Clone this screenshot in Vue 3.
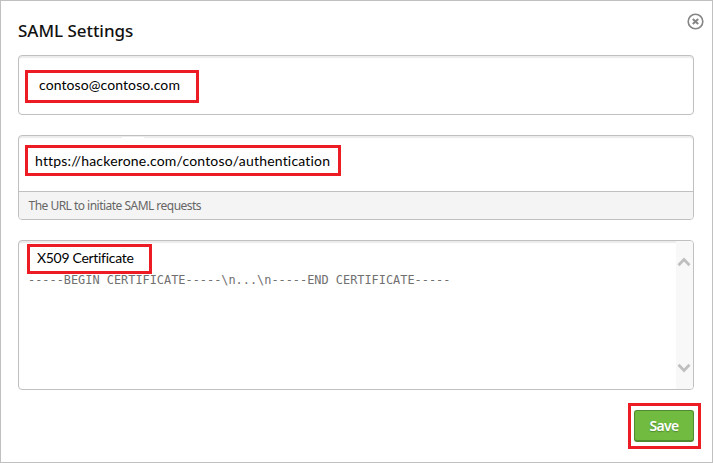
<script setup>
import { ref } from 'vue'

const email = ref('contoso@contoso.com')
const url = ref('https://hackerone.com/contoso/authentication')
const certificate = '-----BEGIN CERTIFICATE-----\\n...\\n-----END CERTIFICATE-----'
</script>

<template>
  <main class="dialog">
    <header class="header">
      <h1 class="title"><span>SAML Settings</span></h1>
      <button class="close" aria-label="Close">
        <svg width="17" height="17" viewBox="0 0 17 17" fill="none" stroke="#858585">
          <circle cx="8.5" cy="8.5" r="7.3" stroke-width="1.6" />
          <path d="M5.8 6l5.4 5M11.2 6l-5.4 5" stroke-width="2" />
        </svg>
      </button>
    </header>

    <section class="field email">
      <div class="mark mark-email"><span class="value">{{ email }}</span></div>
    </section>

    <section class="field url">
      <div class="url-body">
        <div class="mark mark-url"><span class="value">{{ url }}</span></div>
      </div>
      <div class="hint"><span>The URL to initiate SAML requests</span></div>
    </section>

    <section class="field cert">
      <div class="cert-body">
        <div class="mark mark-cert"><span class="value">X509 Certificate</span></div>
        <div class="code">{{ certificate }}</div>
      </div>
      <div class="scrollbar">
        <svg width="14" height="10" viewBox="0 0 14 10" fill="none" stroke="#bfbfbf" stroke-width="2.8"><path d="M1.5 8.2L7 2.5l5.5 5.7" /></svg>
        <svg width="14" height="10" viewBox="0 0 14 10" fill="none" stroke="#bfbfbf" stroke-width="2.8"><path d="M1.5 1.8L7 7.5l5.5-5.7" /></svg>
      </div>
    </section>

    <footer class="footer">
      <div class="mark mark-save"><button class="save">Save</button></div>
    </footer>
  </main>
</template>

<style>
body {
  background: #fff;
}
</style>

<style scoped>
* {
  box-sizing: border-box;
}
.dialog {
  width: 713px;
  height: 463px;
  border: 1px solid #c0c0c0;
  padding: 0 18px 0 17px;
  background: #fff;
  font-family: "Noto Sans", sans-serif;
  overflow: hidden;
}
.header {
  height: 54px;
  display: flex;
  justify-content: space-between;
  margin-right: -10px;
}
.title {
  margin: 17px 0 0;
  font-size: 17px;
  line-height: 26px;
  font-weight: 500;
  letter-spacing: -0.04px;
  color: #111;
  white-space: nowrap;
}
.close {
  width: 17px;
  height: 17px;
  margin-top: 12px;
  padding: 0;
  border: 0;
  background: none;
}
.close svg {
  display: block;
}
.field {
  width: 676px;
  border: 1px solid #c0c0c0;
  border-radius: 4px;
  box-shadow: inset 0 2px 1px #ececec;
  overflow: hidden;
}
.email {
  height: 60px;
  padding: 14px 6px;
}
.url {
  height: 85px;
  margin-top: 20px;
}
.url-body {
  position: relative;
  height: 55px;
  padding: 9px 6px;
}
.url-body::before {
  content: "";
  position: absolute;
  top: 1px;
  left: 103px;
  width: 22px;
  height: 2px;
  background: #fff;
}
.hint {
  height: 29px;
  border-top: 1px solid #c0c0c0;
  background: #f4f4f4;
  padding-left: 9.5px;
  color: #666;
  font-size: 12px;
  letter-spacing: -0.52px;
  line-height: 28px;
  white-space: nowrap;
}
.cert {
  height: 150px;
  margin-top: 20px;
  display: flex;
}
.cert-body {
  flex: 1;
  padding: 3px 8px;
}
.code {
  margin: -2px 0 0 1px;
  color: #707070;
  font: 11.9px/16px "DejaVu Sans Mono", monospace;
  white-space: pre;
}
.scrollbar {
  width: 17px;
  display: flex;
  flex-direction: column;
  justify-content: space-between;
  padding: 16px 0 16px 1px;
  background: #f8f8f8;
}
.mark {
  border: 3px solid #ed1c24;
  display: flex;
  align-items: center;
  white-space: nowrap;
}
.value {
  font-family: Lato, sans-serif;
  font-size: 14px;
  font-variant-ligatures: none;
  line-height: 20px;
  color: #000;
}
.mark-email {
  width: 174px;
  height: 33px;
  padding: 0 0 3px 11px;
  letter-spacing: 0.09px;
}
.mark-url {
  width: 316px;
  height: 31px;
  padding-left: 7px;
  letter-spacing: 0.19px;
}
.mark-cert {
  width: 125px;
  height: 30px;
  padding: 0 0 2px 7px;
  letter-spacing: -0.3px;
}
.footer {
  display: flex;
  justify-content: flex-end;
  margin: 13px -7px 0 0;
}
.mark-save {
  width: 73px;
  height: 46px;
  padding: 0 3px;
}
.save {
  width: 60px;
  height: 32px;
  padding: 0;
  border: 1px solid #508a30;
  border-bottom-width: 2px;
  border-radius: 3px;
  background: #70bb40;
  color: #fff;
  font: 600 14px/28px "Noto Sans", sans-serif;
  letter-spacing: -0.7px;
  text-shadow: 0 1px 1px #508a30;
}
</style>
